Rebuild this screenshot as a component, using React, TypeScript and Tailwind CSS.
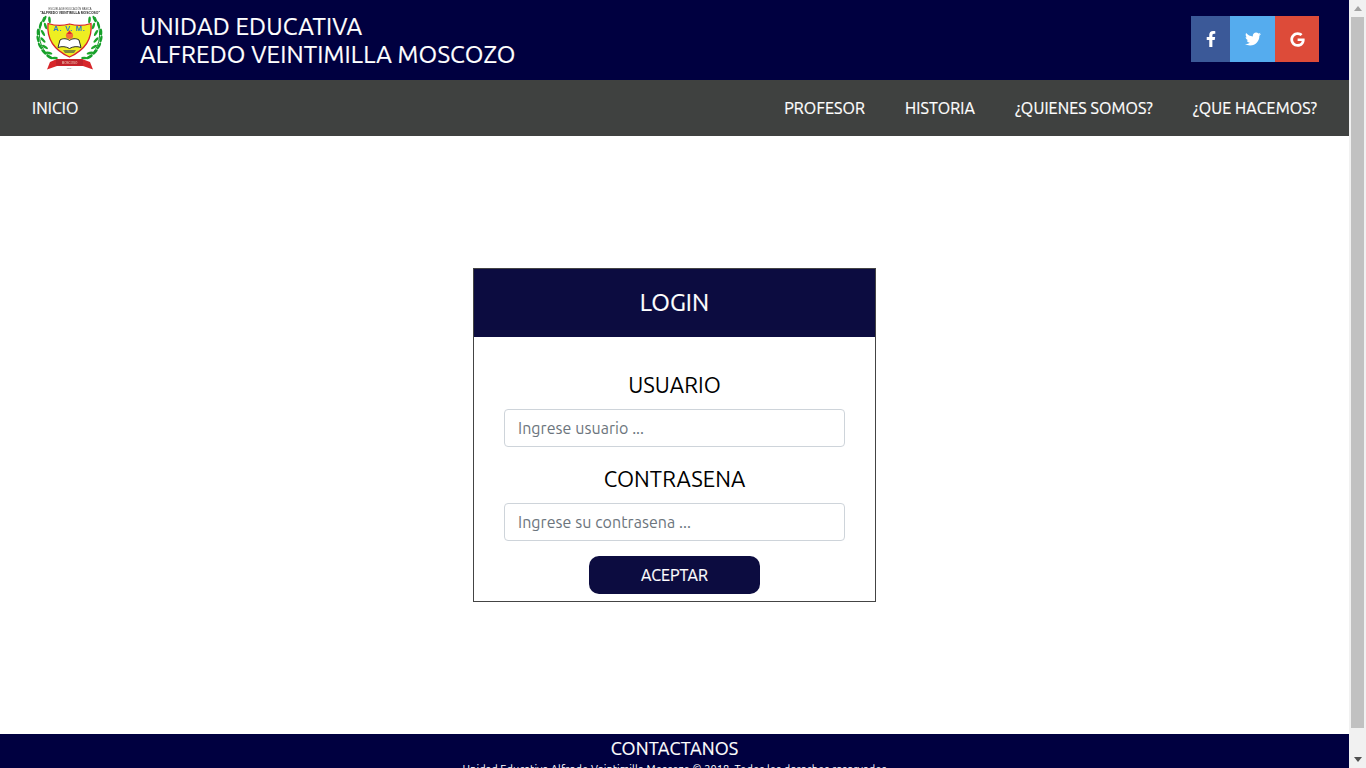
import { FaFacebookF, FaTwitter, FaGoogle } from "react-icons/fa";

const leaves: number[][] = [
  [15, 19, 25], [11, 25, 15], [8.5, 32, 2], [8.5, 39, -12], [10.5, 46, -28], [14.5, 52, -45], [20, 57, -62],
];

function Logo() {
  return (
    <svg viewBox="0 0 80 80" className="h-20 w-20">
      <defs>
        <filter id="soft" x="-5%" y="-5%" width="110%" height="110%">
          <feGaussianBlur stdDeviation="0.28" />
        </filter>
      </defs>
      <g filter="url(#soft)">
        <text x="40" y="9.6" textAnchor="middle" fontSize="2.9" textLength="43" lengthAdjust="spacingAndGlyphs" fill="#444" fontFamily="Liberation Sans">ESCUELA DE EDUCACIÓN BÁSICA</text>
        <text x="40" y="13.8" textAnchor="middle" fontSize="3.4" fontWeight="700" textLength="60" lengthAdjust="spacingAndGlyphs" fill="#222" fontFamily="Liberation Sans">"ALFREDO VEINTIMILLA MOSCOSO"</text>
        <path d="M14 17C7 30 7 48 22 58M65 17C72 30 72 48 57 58" fill="none" stroke="#16952a" strokeWidth="1" />
        {leaves.map(([x, y, r], i) => (
          <g key={i}>
            <ellipse cx={x - 0.5} cy={y} rx="1.3" ry="3.6" fill="#15a02a" transform={`rotate(${r} ${x - 0.5} ${y})`} />
            <ellipse cx={x + 4.5} cy={y + 1} rx="1.3" ry="3.4" fill="#1fa62c" transform={`rotate(${r - 30} ${x + 4.5} ${y + 1})`} />
            <ellipse cx={79.5 - x} cy={y} rx="1.3" ry="3.6" fill="#15a02a" transform={`rotate(${-r} ${79.5 - x} ${y})`} />
            <ellipse cx={74.5 - x} cy={y + 1} rx="1.3" ry="3.4" fill="#1fa62c" transform={`rotate(${30 - r} ${74.5 - x} ${y + 1})`} />
          </g>
        ))}
        <path d="M18 23.5Q29 27 39.5 24Q50 27 61 23.5C62.5 39 55 50 39.5 57C24 50 16.5 39 18 23.5Z" fill="#eeee22" stroke="#d8232a" strokeWidth="1.3" />
        <text x="39.5" y="31" textAnchor="middle" fontSize="7.6" letterSpacing="0.7" fill="#2a7cc0" fontFamily="Liberation Sans" fontWeight="700">A. V. M.</text>
        <circle cx="39.5" cy="35.5" r="3.6" fill="#f0703c" />
        <path d="M37 34l2.5-3.8 2.5 3.8z" fill="#e0282d" />
        <path d="M30 40C33 38 37 38.5 39.5 40.5C42 38.5 46 38 49 40L51 47.5C47 46 43 46.5 39.5 48.5C36 46.5 32 46 28 47.5Z" fill="#fff" stroke="#2a2a2a" strokeWidth="1" />
        <path d="M33 50H46L44 53H35Z" fill="#7d8a3a" />
        <path d="M20 62L27 59H52L60 62L63 69.5L53 66H27L17 69.5Z" fill="#d8262c" />
        <path d="M26 59.5H53V65.5H26Z" fill="#c0202a" />
        <text x="39.5" y="63.8" textAnchor="middle" fontSize="3" fill="#f4d9c0" fontFamily="Liberation Sans">MOSCOSO</text>
        <text x="39.5" y="68.5" textAnchor="middle" fontSize="2.2" fill="#777" fontFamily="Liberation Sans">LOJA</text>
      </g>
    </svg>
  );
}

function Scrollbar() {
  return (
    <div className="flex h-screen w-[17px] shrink-0 flex-col bg-[#f1f1f1]">
      <div className="flex h-[17px] items-center justify-center">
        <svg viewBox="0 0 8 5" className="h-[5px] w-2"><path d="M4 0L8 5H0Z" fill="#a3a3a3" /></svg>
      </div>
      <div className="ml-[2px] h-[711px] w-[13px] bg-[#c1c1c1]" />
      <div className="flex-1" />
      <div className="flex h-[17px] items-center justify-center">
        <svg viewBox="0 0 8 5" className="h-[5px] w-2"><path d="M0 0H8L4 5Z" fill="#505050" /></svg>
      </div>
    </div>
  );
}

export default function App() {
  const font = { fontFamily: 'Ubuntu, "Noto Sans", sans-serif' };
  const heavy = "[-webkit-text-stroke:0.2px_white]";
  return (
    <div className="flex h-screen overflow-hidden bg-white" style={font}>
      <div className="flex h-screen min-w-0 flex-1 flex-col overflow-hidden">
        <header className="flex h-20 shrink-0 items-center bg-[#000040] px-[30px]">
          <div className="h-20 w-20 shrink-0 bg-white"><Logo /></div>
          <div className={`ml-[30px] flex-1 pt-[2px] text-[24px] leading-[28px] tracking-[0.15px] text-white ${heavy}`}>
            <div>UNIDAD EDUCATIVA</div>
            <div>ALFREDO VEINTIMILLA MOSCOZO</div>
          </div>
          <div className="mb-[2px] flex h-[46px] text-white">
            <div className="flex w-[39px] items-center justify-center bg-[#3b5998]"><FaFacebookF size={16} /></div>
            <div className="flex w-[45px] items-center justify-center bg-[#55acee]"><FaTwitter size={16} /></div>
            <div className="flex w-[44px] items-center justify-center bg-[#dd4b39]"><FaGoogle size={15} /></div>
          </div>
        </header>
        <nav className={`flex h-14 shrink-0 items-center justify-between bg-[#3f4140] px-8 text-base tracking-[0.1px] text-white ${heavy}`}>
          <span>INICIO</span>
          <div className="flex gap-10">
            <span>PROFESOR</span>
            <span>HISTORIA</span>
            <span>¿QUIENES SOMOS?</span>
            <span>¿QUE HACEMOS?</span>
          </div>
        </nav>
        <main className="flex flex-1 items-start justify-center pt-[132px]">
          <div className="flex h-[334px] w-[403px] flex-col border border-[#444] bg-white">
            <div className={`flex h-[68px] items-center justify-center bg-[#0c0c40] text-[24px] text-white ${heavy}`}>LOGIN</div>
            <div className="flex flex-col items-center px-[30px] pt-[34px]">
              <div className="h-[28px] text-[22px] leading-[28px] tracking-[0.05px] text-black">USUARIO</div>
              <input readOnly placeholder="Ingrese usuario ..." className="mt-[10px] h-[38px] w-[341px] rounded border border-[#ced4da] px-[13px] text-base tracking-[0.06px] outline-none placeholder:text-[#6c757d]" />
              <div className="mt-[18px] h-[28px] text-[22px] leading-[28px] tracking-[0.05px] text-black">CONTRASENA</div>
              <input readOnly placeholder="Ingrese su contrasena ..." className="mt-[10px] h-[38px] w-[341px] rounded border border-[#ced4da] px-[13px] text-base tracking-[0.06px] outline-none placeholder:text-[#6c757d]" />
              <button className={`mt-[15px] h-[38px] w-[171px] rounded-[10px] bg-[#0c0c40] text-base text-white ${heavy}`}>ACEPTAR</button>
            </div>
          </div>
        </main>
        <footer className="h-[34px] shrink-0 overflow-hidden bg-[#000040] text-center text-white">
          <div className={`h-[28px] pt-[3px] text-[18px] leading-[22px] tracking-[0.1px] ${heavy}`}>CONTACTANOS</div>
          <div className="text-[11px] leading-[14px] tracking-[0.04px]">Unidad Educativa Alfredo Veintimilla Moscozo © 2018. Todos los derechos reservados</div>
        </footer>
      </div>
      <Scrollbar />
    </div>
  );
}
